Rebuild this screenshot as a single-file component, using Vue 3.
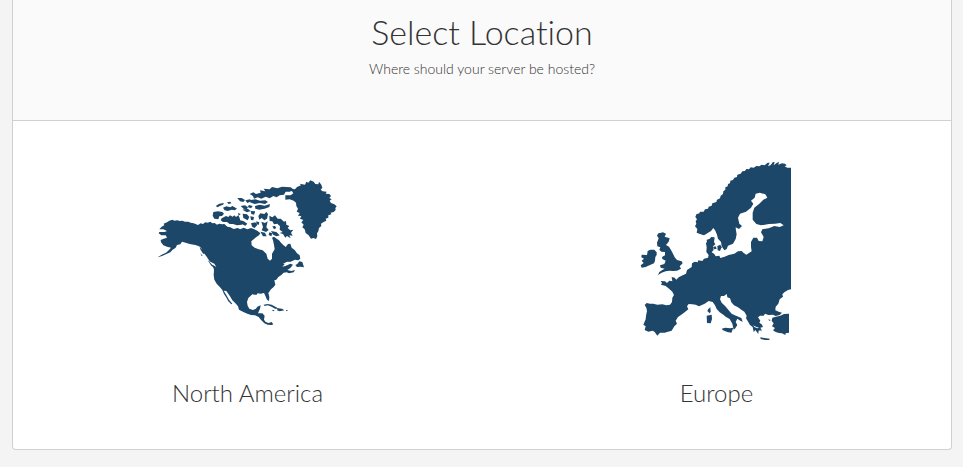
<template>
  <main class="page">
    <section class="panel">
      <header class="panel-header">
        <h1>Select Location</h1>
        <p>Where should your server be hosted?</p>
      </header>

      <div class="locations">
        <a
          v-for="location in locations"
          :key="location.id"
          class="location"
          :href="'#' + location.id"
        >
          <svg class="map" :viewBox="location.viewBox" aria-hidden="true">
            <path v-for="(d, i) in location.land" :key="i" :d="d" />
            <path v-for="(d, i) in location.water" :key="'w' + i" class="water" :d="d" />
          </svg>
          <span class="location-name">{{ location.name }}</span>
        </a>
      </div>
    </section>
  </main>
</template>

<script setup>
const locations = [
  {
    id: 'north-america',
    name: 'North America',
    viewBox: '23 -27 540 540',
    land: [
      // mainland
      'M27 178 34 170 42 166 40 161 50 157 57 152 66 149 72 152 81 151 88 153 96 152 104 155 114 155 121 158 130 160 143 165 151 160 158 162 165 157 172 158 180 155 186 160 193 159 200 164 207 161 215 163 222 162 231 170 240 172 250 177 262 174 270 178 280 173 291 178 302 174 312 178 322 183 330 190 326 196 318 201 310 208 303 214 304 226 313 233 325 238 337 241 348 251 352 266 359 272 365 266 365 251 373 238 371 225 368 211 365 203 371 200 379 206 386 211 392 218 398 224 406 231 413 222 420 221 424 233 433 240 440 250 448 256 450 266 444 271 434 269 421 275 408 277 396 290 407 287 420 281 428 284 420 294 411 300 423 303 434 300 430 307 416 310 409 307 400 308 392 316 384 321 378 329 372 331 375 344 370 351 362 358 354 369 357 381 356 393 350 389 345 377 341 369 331 371 322 370 318 375 306 373 294 384 290 396 292 407 297 416 308 420 317 416 321 410 331 406 329 416 325 425 323 430 336 430 343 437 341 449 346 456 355 459 364 456 369 463 364 465 352 464 342 460 333 451 325 441 314 436 302 435 291 431 279 426 266 419 263 409 254 398 246 391 239 379 228 363 220 362 228 375 236 389 246 401 243 403 234 394 227 381 221 372 216 360 209 352 199 341 192 329 190 315 191 300 188 287 181 282 177 272 168 259 159 247 153 234 146 229 135 225 118 222 106 218 95 215 90 223 80 225 76 233 66 240 60 247 50 251 37 257 22 262 34 254 47 248 56 240 62 233 50 230 39 226 32 217 31 210 40 206 50 203 46 196 33 196 25 190 27 186 43 186 50 183 39 178Z',
      'M148 231 156 238 163 250 159 252 151 240Z',
      'M150 249 157 258 154 258Z',
      'M173 272 180 274 193 285 198 296 193 296 182 286Z',
      // western Arctic islands
      'M196 108 207 101 221 99 218 104 208 108 202 112Z',
      'M230 97 240 95 243 100 235 102Z',
      'M218 113 228 109 240 112 246 108 253 112 260 116 253 121 244 119 232 123 223 121Z',
      'M189 126 203 124 216 126 221 131 215 138 207 139 204 148 192 146 187 137Z',
      'M214 145 227 138 234 141 239 136 247 140 252 136 257 141 264 136 268 144 270 152 279 159 274 164 260 166 248 162 238 162 230 156 218 156 211 151Z',
      'M261 84 274 84 284 90 279 96 269 94Z',
      'M271 108 284 106 293 112 287 119 278 115Z',
      'M277 131 290 133 297 141 292 151 279 144Z',
      'M263 129 271 132 265 137Z',
      'M285 91 299 88 305 93 291 99Z',
      // Queen Elizabeth Islands and Ellesmere
      'M298 72 309 67 317 72 331 68 329 61 345 64 340 56 358 58 365 51 381 55 395 50 421 52 429 58 419 65 406 65 401 74 388 76 379 82 369 78 358 85 346 80 333 86 322 82 311 86 308 78Z',
      'M302 90 315 88 329 92 345 91 353 96 344 102 328 99 313 102 299 97Z',
      'M314 108 328 104 343 107 359 102 357 111 343 116 327 119 315 116Z',
      'M276 119 292 116 301 123 290 127Z',
      'M296 105 307 108 302 115 292 111Z',
      'M301 123 315 124 311 134 303 132Z',
      'M300 139 311 141 309 151 302 150Z',
      'M269 151 279 153 291 161 285 167 274 162Z',
      'M302 160 315 157 321 165 312 175 305 169Z',
      'M324 138 330 130 342 132 348 126 353 132 350 146 342 151 334 144 327 149Z',
      'M318 154 327 157 325 165 318 162Z',
      'M333 155 344 159 352 154 348 172 355 180 347 186 334 181 338 171Z',
      // Baffin and Southampton
      'M357 137 366 142 374 136 382 146 391 146 401 155 407 153 408 164 417 168 412 174 420 181 429 179 422 188 427 197 417 196 421 205 410 198 405 203 398 192 388 189 397 186 388 179 389 169 381 161 371 163 366 154 358 153Z',
      'M362 183 378 186 388 196 379 199 368 194Z',
      'M366 169 374 168 378 174 371 178Z',
      'M330 185 344 188 349 199 338 199Z',
      'M357 187 366 190 363 199 355 195Z',
      // Greenland
      'M405 76 421 76 429 70 425 64 413 61 421 56 434 58 440 51 452 46 448 41 464 44 468 35 474 38 480 31 490 35 495 42 504 43 506 35 513 44 516 53 511 59 517 64 529 65 526 71 537 72 542 78 537 84 544 88 538 92 542 99 552 103 559 109 555 114 556 120 550 126 541 128 543 133 534 136 534 143 526 146 528 152 520 156 512 161 513 168 506 174 504 184 500 190 501 199 497 207 489 204 482 206 475 196 466 189 463 178 456 172 460 164 453 157 459 150 449 146 453 138 443 137 448 129 439 125 443 116 438 108 437 98 430 92 418 88 405 89Z',
      // Newfoundland and the Caribbean
      'M447 274 456 276 461 292 451 290 440 291 435 285 441 282Z',
      'M340 404 352 402 364 404 375 410 386 416 374 416 364 410 352 406 343 408Z',
      'M382 415 395 416 402 421 388 424 380 421Z',
      'M364 419 373 421 369 424Z',
      'M407 420 414 421 408 424Z'
    ],
    water: [
      // inlets on the west and east coasts
      'M174 272 192 281 198 291 184 283Z',
      'M398 281 411 275 422 276 408 283Z'
    ]
  },
  {
    id: 'europe',
    name: 'Europe',
    viewBox: '-22 20 540 540',
    land: [
      // mainland
      'M470 405 461 407 450 414 444 420 446 427 436 435 432 448 424 457 423 468 433 472 443 475 436 482 424 485 416 481 402 482 392 478 388 484 377 484 371 489 378 499 375 505 382 510 386 518 378 520 383 529 373 527 372 539 363 527 358 533 355 518 347 512 340 500 335 492 337 484 330 472 322 467 311 459 299 453 291 444 287 432 279 429 277 419 269 425 260 425 257 435 262 445 273 456 283 468 292 478 305 484 321 491 325 502 318 499 309 493 304 503 309 512 303 522 298 526 294 508 286 494 274 487 267 481 256 474 247 464 242 453 235 443 223 440 211 448 201 453 194 456 184 451 174 450 163 449 158 456 162 465 149 475 143 480 131 488 124 499 128 508 120 516 112 529 101 532 91 535 77 535 69 544 61 533 55 529 42 532 31 527 34 516 27 511 34 495 35 484 38 470 36 460 31 452 37 446 47 448 57 448 69 451 84 450 96 453 107 451 113 443 114 430 119 422 114 412 105 404 94 395 80 391 83 386 79 380 92 381 98 386 105 379 114 381 112 368 121 370 126 376 133 369 145 363 155 358 158 347 172 338 173 327 181 322 190 324 192 318 204 320 209 313 221 310 223 302 216 293 217 279 215 267 219 259 229 257 241 250 239 263 243 270 236 276 238 286 232 294 240 299 244 306 255 304 258 311 271 307 283 302 300 298 311 291 322 290 328 296 336 301 345 295 352 291 350 278 350 263 357 250 368 250 373 260 384 261 388 248 380 234 384 225 403 222 420 215 436 218 448 213 438 206 422 208 404 209 380 213 366 209 355 196 355 175 360 160 375 148 387 136 399 130 393 120 376 115 364 118 361 130 350 139 357 148 350 160 335 172 317 178 311 190 315 208 323 215 314 224 304 219 305 229 307 240 304 254 296 268 281 274 277 284 270 288 262 276 260 263 251 253 248 241 243 229 237 221 230 230 219 237 209 243 199 240 187 235 189 224 182 216 186 208 184 201 188 195 183 188 186 180 195 177 197 172 208 172 212 165 221 163 223 157 232 154 234 147 246 143 248 136 257 132 259 124 266 119 267 111 273 106 273 99 280 96 281 89 287 87 288 79 296 77 300 70 308 68 309 61 319 58 324 51 332 50 336 44 344 45 349 39 358 40 366 35 375 36 382 31 391 33 400 25 406 25 401 36 409 32 416 23 421 23 418 33 428 25 434 23 432 31 443 27 452 28 457 33 451 36 459 40 470 40Z',
      // Great Britain
      'M77 236 86 234 95 238 91 247 106 252 103 262 95 272 104 277 110 287 116 298 121 309 128 317 142 321 145 327 136 336 140 343 128 349 116 350 105 349 94 351 82 355 71 362 75 353 84 347 91 343 79 340 77 333 90 329 94 319 84 314 83 308 92 303 92 293 81 292 75 286 78 279 69 276 68 265 73 252 68 244 72 237Z',
      // Ireland
      'M40 290 48 286 60 286 67 294 67 302 63 308 62 319 59 327 47 332 34 338 22 340 19 333 28 326 22 319 29 313 21 309 22 301 38 302Z',
      // Danish islands
      'M236 278 244 276 247 283 240 285Z',
      'M249 275 258 271 262 279 257 290 250 288Z',
      'M216 257 226 253 231 248 241 249 235 258 221 263Z',
      // Corsica, Sardinia, Sicily, Crete
      'M222 464 228 459 229 472 226 477 219 470Z',
      'M217 484 232 481 233 494 229 507 218 506Z',
      'M262 523 273 520 288 522 297 520 291 535 279 533 266 528Z',
      'M378 549 390 551 406 553 405 557 392 557 379 554Z',
      // Anatolia and Aegean islands
      'M414 490 425 487 438 484 449 479 464 478 464 535 454 537 453 542 443 537 434 536 424 533 416 528 422 521 413 516 418 507 412 500Z',
      'M357 516 369 520 378 524 374 530 361 524Z',
      'M402 495 409 497 405 500Z'
    ],
    water: [
      'M356 513 365 517 374 520 370 522 361 519Z'
    ]
  }
]
</script>

<style>
body {
  margin: 0;
  background: #f4f4f4;
}
</style>

<style scoped>
.page {
  padding: 0 11px 17px 12px;
  font-family: Lato, "Open Sans", sans-serif;
  font-weight: 300;
  font-variant-ligatures: none;
  color: #333;
}

.panel {
  border: 1px solid #d0d0d0;
  border-top: 0;
  border-radius: 0 0 4px 4px;
  background: #fff;
  overflow: hidden;
}

.panel-header {
  padding: 10px 20px 40px;
  border-bottom: 1px solid #d0d0d0;
  background: #fafafa;
  text-align: center;
}

h1 {
  margin: 0 0 4px;
  font-size: 34px;
  font-weight: 300;
  line-height: 44px;
}

.panel-header p {
  margin: 0;
  font-size: 14px;
  line-height: 22px;
}

.locations {
  display: grid;
  grid-template-columns: 1fr 1fr;
}

.location {
  display: flex;
  flex-direction: column;
  align-items: center;
  gap: 36px;
  padding: 40px 20px;
  color: inherit;
  text-decoration: none;
}

.map {
  width: 180px;
  height: 180px;
  fill: #1d4769;
}

.water {
  fill: #fff;
}

.location-name {
  font-size: 24px;
  line-height: 32px;
}
</style>
